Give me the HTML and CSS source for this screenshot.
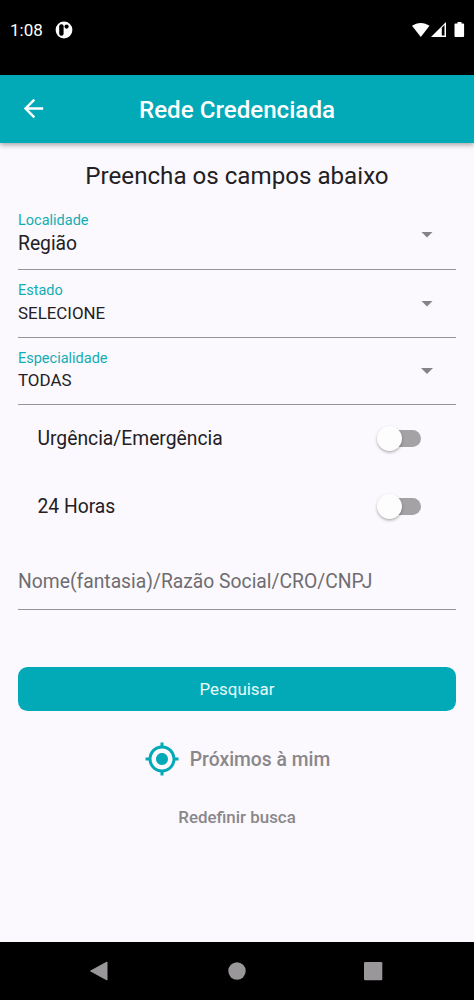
FILE: index.html
```html
<!DOCTYPE html>
<html lang="pt-BR">
<head>
  <meta charset="UTF-8">
  <meta name="viewport" content="width=device-width, initial-scale=1.0">
  <title>Rede Credenciada</title>
  <link rel="stylesheet" href="styles.css">
</head>
<body>
  <div class="statusbar">
    <span class="clock">1:08</span>
    <svg class="app-icon" width="18" height="18" viewBox="0 0 18 18">
      <circle cx="9" cy="9" r="8.4" fill="#fff"/>
      <rect x="4.2" y="3.3" width="4.4" height="11.4" rx="2" fill="#000"/>
      <circle cx="11.6" cy="5.6" r="2.1" fill="#000"/>
    </svg>
    <div class="status-icons">
      <svg width="56" height="18" viewBox="0 0 56 18">
        <path d="M2 4.8C7 .9 14.5.9 19.500 4.800L10.800 16z" fill="#fff"/>
        <path d="M36 1v15H21z" fill="#fff"/>
        <path d="M31.800 6.800l2.700-2.700V14.500h-2.700z" fill="#000"/>
        <path d="M47.500 1h4v1.500h1.700a.9.900 0 0 1 .9.900v11.700a.9.900 0 0 1-.9.900h-7.800a.9.900 0 0 1-.9-.9V3.400a.9.900 0 0 1 .9-.9h2.100z" fill="#fff"/>
      </svg>
    </div>
  </div>

  <header class="appbar">
    <svg class="back" width="29" height="29" viewBox="0 0 24 24">
      <path d="M20 11H7.830l5.590-5.590L12 4l-8 8 8 8 1.410-1.410L7.830 13H20v-2z" fill="#fff"/>
    </svg>
    <h1>Rede Credenciada</h1>
  </header>

  <main>
    <h2>Preencha os campos abaixo</h2>

    <div class="field first">
      <div>
        <label>Localidade</label>
        <p class="value large">Região</p>
      </div>
      <span class="arrow"></span>
    </div>
    <div class="field">
      <div>
        <label>Estado</label>
        <p class="value">SELECIONE</p>
      </div>
      <span class="arrow"></span>
    </div>
    <div class="field">
      <div>
        <label>Especialidade</label>
        <p class="value">TODAS</p>
      </div>
      <span class="arrow"></span>
    </div>

    <div class="switch-row">
      <span>Urgência/Emergência</span>
      <span class="switch"></span>
    </div>
    <div class="switch-row">
      <span>24 Horas</span>
      <span class="switch"></span>
    </div>

    <input type="text" class="search" placeholder="Nome(fantasia)/Razão Social/CRO/CNPJ">

    <button class="submit">Pesquisar</button>

    <div class="nearby">
      <svg width="36" height="36" viewBox="0 0 24 24">
        <path d="M12 8c-2.210 0-4 1.790-4 4s1.790 4 4 4 4-1.790 4-4-1.790-4-4-4zm8.940 3c-.46-4.170-3.770-7.480-7.940-7.940V1h-2v2.060C6.830 3.520 3.520 6.830 3.060 11H1v2h2.060c.46 4.170 3.770 7.480 7.940 7.940V23h2v-2.060c4.170-.46 7.480-3.770 7.940-7.940H23v-2h-2.060zM12 19c-3.870 0-7-3.130-7-7s3.130-7 7-7 7 3.130 7 7-3.130 7-7 7z" fill="#02aab7"/>
      </svg>
      <span>Próximos à mim</span>
    </div>
    <div class="reset">Redefinir busca</div>
  </main>

  <nav>
    <svg width="20" height="20" viewBox="0 0 20 20"><path d="M18 1v18L1.500 10z" fill="#999799" stroke="#999799" stroke-width="1" stroke-linejoin="round"/></svg>
    <svg width="20" height="20" viewBox="0 0 20 20"><circle cx="11" cy="10" r="8.700" fill="#999799"/></svg>
    <svg width="20" height="20" viewBox="0 0 20 20"><rect x="1" y="1" width="18.300" height="18.300" rx="1.200" fill="#999799"/></svg>
  </nav>
</body>
</html>
```
FILE: styles.css
```css
* { box-sizing: border-box; }
body { margin: 0; height: 1000px; display: flex; flex-direction: column; font-family: Roboto, sans-serif; background: #fbf9fd; color: #222024; overflow: hidden; }
h1, h2, p { margin: 0; font-weight: 400; }

.statusbar { height: 75px; padding: 0 8px 15px 10px; display: flex; align-items: center; background: #000; color: #fff; flex-shrink: 0; }
.clock { font-size: 17px; }
.app-icon { margin-left: 12.5px; }
.status-icons { margin-left: auto; height: 18px; }

.appbar { height: 67.5px; padding-left: 19px; display: grid; grid-template-columns: 29px 1fr 48px; align-items: center; background: #02aab7; color: #fff; flex-shrink: 0; box-shadow: 0 2px 5px rgba(0, 0, 0, .35); }
.appbar h1 { font-size: 24.15px; font-weight: 500; text-align: center; padding-top: 2px; }

main { flex: 1; padding: 0 18px; }
h2 { height: 60px; padding-top: 19px; font-size: 24.15px; line-height: 28px; text-align: center; }

.field { height: 67.5px; padding: 12px 23px 0 0; display: flex; justify-content: space-between; border-bottom: 1.2px solid #979599; }
.field label { display: block; font-size: 14.5px; line-height: 17px; color: #14acb3; }
.value { margin-top: 3.5px; font-size: 16.9px; line-height: 20px; }
.value.large { margin-top: 5.5px; font-size: 19.3px; }
.field.first { padding-top: 9px; }
.arrow { margin-top: 18.5px; width: 12px; height: 6px; background: #858386; clip-path: polygon(0 0, 100% 0, 50% 100%); }
.field.first .arrow { margin-top: 20px; }

.switch-row { height: 67.5px; padding: 0 35px 0 19.5px; display: flex; align-items: center; justify-content: space-between; font-size: 19.3px; }
.switch { position: relative; width: 40px; height: 17px; border-radius: 9px; background: #a4a2a5; }
.switch::before { content: ""; position: absolute; left: -4px; top: -4px; width: 25px; height: 25px; border-radius: 50%; background: #fdfdfd; box-shadow: 0 1.5px 3px rgba(0, 0, 0, .3); }

.search { display: block; width: 100%; height: 69.5px; padding: 14px 0 0; border: 0; border-bottom: 1px solid #979599; background: none; font: 19.3px Roboto, sans-serif; outline: none; }
.search::placeholder { color: #6f6d71; opacity: 1; }

.submit { display: block; width: 100%; height: 43.5px; margin-top: 57.5px; border: 0; border-radius: 9.5px; background: #02aab7; color: #e8fbfc; font: 16.9px Roboto, sans-serif; }

.nearby { margin-top: 30.5px; height: 36px; display: flex; align-items: center; justify-content: center; gap: 10px; font-size: 19.3px; font-weight: 500; color: #89878b; }
.reset { margin-top: 30px; font-size: 16.9px; line-height: 20px; font-weight: 500; text-align: center; color: #89878b; }

nav { height: 58px; padding: 0 91px 0 89px; display: flex; align-items: center; justify-content: space-between; background: #000; flex-shrink: 0; }
```
